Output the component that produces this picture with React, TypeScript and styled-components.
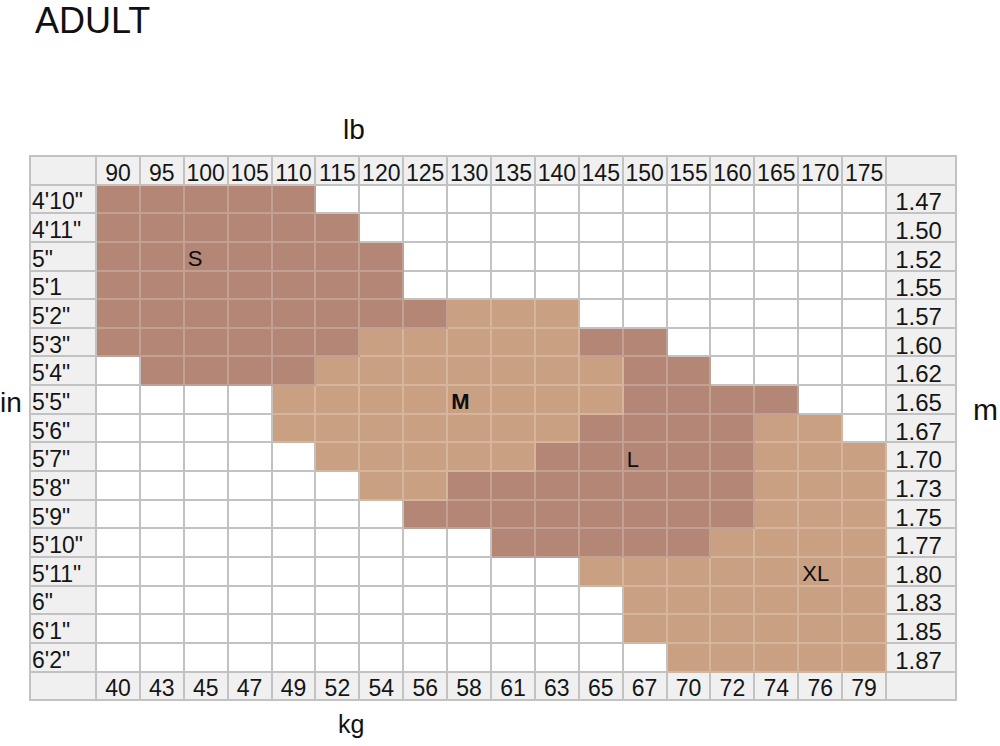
import React from 'react';
import styled, { createGlobalStyle } from 'styled-components';

const GlobalStyle = createGlobalStyle`
  html, body {
    margin: 0;
    padding: 0;
    background: #ffffff;
  }
  body {
    font-family: "Liberation Sans", Arial, sans-serif;
    color: #111111;
  }
`;

type Tone = 'blank' | 'dark' | 'light';

const LB = [90, 95, 100, 105, 110, 115, 120, 125, 130, 135, 140, 145, 150, 155, 160, 165, 170, 175];
const KG = [40, 43, 45, 47, 49, 52, 54, 56, 58, 61, 63, 65, 67, 70, 72, 74, 76, 79];
const HEIGHTS = [
    `4'10"`, `4'11"`, `5"`, `5'1`, `5'2"`, `5'3"`, `5'4"`, `5'5"`, `5'6"`,
    `5'7"`, `5'8"`, `5'9"`, `5'10"`, `5'11"`, `6"`, `6'1"`, `6'2"`,
];
const METERS = [
    '1.47', '1.50', '1.52', '1.55', '1.57', '1.60', '1.62', '1.65', '1.67',
    '1.70', '1.73', '1.75', '1.77', '1.80', '1.83', '1.85', '1.87',
];

// d = dark band (S / L), l = light band (M / XL), . = empty
const BANDS = [
    'ddddd.............',
    'dddddd............',
    'ddddddd...........',
    'ddddddd...........',
    'ddddddddlll.......',
    'ddddddllllldd.....',
    '.ddddllllllldd....',
    '....lllllllldddd..',
    '....lllllllddddll.',
    '.....llllldddddlll',
    '......lldddddddlll',
    '.......ddddddddlll',
    '.........dddddllll',
    '...........lllllll',
    '............llllll',
    '............llllll',
    '.............lllll',
];

const MARKS: Record<string, { text: string; bold?: boolean }> = {
    '2-2': { text: 'S' },
    '7-8': { text: 'M', bold: true },
    '9-12': { text: 'L' },
    '13-16': { text: 'XL' },
};

const toneOf = (c: string): Tone => (c === 'd' ? 'dark' : c === 'l' ? 'light' : 'blank');

const Page = styled.div`
  width: 1000px;
  height: 746px;
  overflow: hidden;
`;

const Title = styled.div`
  padding-left: 35px;
  font-size: 36px;
  line-height: 41px;
`;

const AxisLabel = styled.div<{ $indent: number; $size: number; $gap: number }>`
  padding-left: ${p => p.$indent}px;
  margin-top: ${p => p.$gap}px;
  font-size: ${p => p.$size}px;
  line-height: ${p => p.$size}px;
  height: ${p => p.$size}px;
`;

const ChartRow = styled.div`
  display: flex;
  align-items: flex-start;
  margin-top: 11px;
`;

const SideAxis = styled.div<{ $width: number; $offset: number; $size: number; $indent?: number }>`
  flex: none;
  box-sizing: border-box;
  width: ${p => p.$width}px;
  padding-top: ${p => p.$offset}px;
  padding-left: ${p => p.$indent ?? 0}px;
  font-size: ${p => p.$size}px;
  line-height: ${p => p.$size}px;
`;

const Table = styled.div`
  flex: none;
  display: grid;
  grid-template-columns: 66px repeat(18, 43.9px) 70px;
  grid-auto-rows: 28.65px;
  border-left: 2px solid #c2c2c2;
  border-top: 2px solid #c2c2c2;
`;

const HeadCell = styled.div<{ $align?: 'start' | 'center' | 'shift' }>`
  box-sizing: border-box;
  display: flex;
  align-items: center;
  justify-content: ${p => (p.$align === 'start' ? 'flex-start' : 'center')};
  padding: 6px ${p => (p.$align === 'shift' ? 5 : 0)}px 0 ${p => (p.$align === 'start' ? 1 : 0)}px;
  background: #f0f0f0;
  border-right: 2px solid #c2c2c2;
  border-bottom: 2px solid #c2c2c2;
  font-size: ${p => (p.$align === 'shift' ? 24 : 23)}px;
  line-height: 23px;
  white-space: nowrap;
  color: #151515;
`;

const BodyCell = styled.div<{ $tone: Tone }>`
  box-sizing: border-box;
  display: flex;
  align-items: center;
  justify-content: flex-start;
  padding: 6px 0 0 3px;
  background: ${p => (p.$tone === 'dark' ? '#b38676' : p.$tone === 'light' ? '#c9a081' : '#ffffff')};
  border-right: 2px solid ${p => (p.$tone === 'blank' ? '#c2c2c2' : 'rgba(255, 255, 255, 0.22)')};
  border-bottom: 2px solid ${p => (p.$tone === 'blank' ? '#c2c2c2' : 'rgba(255, 255, 255, 0.22)')};
`;

const SizeMark = styled.span<{ $bold?: boolean }>`
  font-size: 22px;
  line-height: 22px;
  font-weight: ${p => (p.$bold ? 700 : 400)};
  color: #0d0d0d;
  white-space: nowrap;
`;

const SizeChart = () => (
    <Table>
        <HeadCell />
        {LB.map(lb => <HeadCell key={`lb-${lb}`}>{lb}</HeadCell>)}
        <HeadCell />

        {HEIGHTS.map((height, r) => (
            <React.Fragment key={height}>
                <HeadCell $align="start">{height}</HeadCell>
                {BANDS[r].split('').map((c, col) => {
                    const mark = MARKS[`${r}-${col}`];
                    return (
                        <BodyCell key={col} $tone={toneOf(c)}>
                            {mark && <SizeMark $bold={mark.bold}>{mark.text}</SizeMark>}
                        </BodyCell>
                    );
                })}
                <HeadCell $align="shift">{METERS[r]}</HeadCell>
            </React.Fragment>
        ))}

        <HeadCell />
        {KG.map((kg, i) => <HeadCell key={`kg-${i}`}>{kg}</HeadCell>)}
        <HeadCell />
    </Table>
);

const App = () => (
    <Page>
        <GlobalStyle />
        <Title>ADULT</Title>
        <AxisLabel $indent={343} $size={28} $gap={75}>lb</AxisLabel>
        <ChartRow>
            <SideAxis $width={29} $offset={234} $size={28}>in</SideAxis>
            <SizeChart />
            <SideAxis $width={43} $offset={240} $size={30} $indent={16}>m</SideAxis>
        </ChartRow>
        <AxisLabel $indent={338} $size={25} $gap={11}>kg</AxisLabel>
    </Page>
);

export default App;
